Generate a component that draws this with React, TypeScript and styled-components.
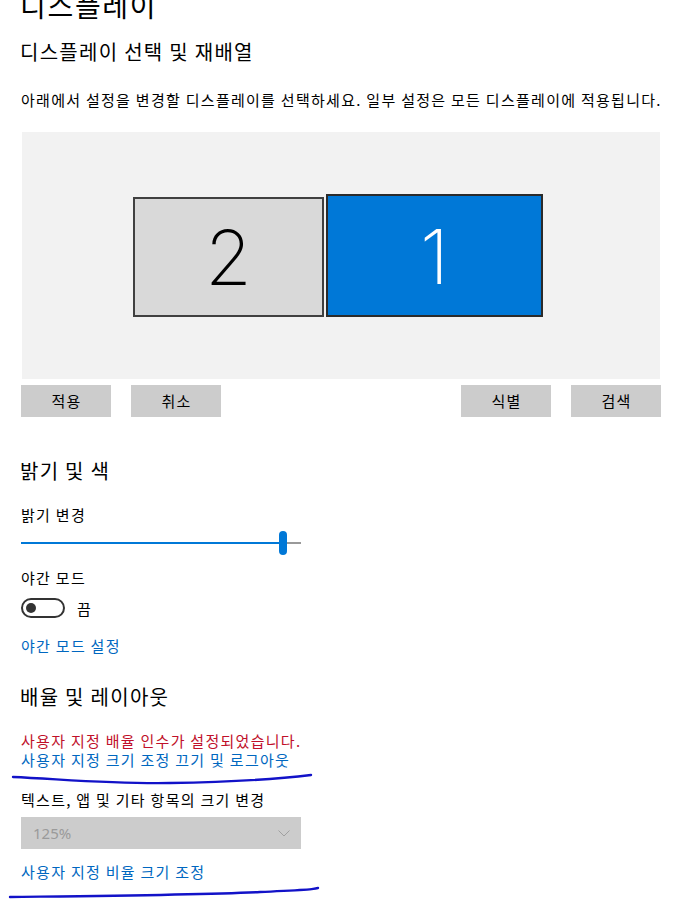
import React from "react";
import styled, { createGlobalStyle } from "styled-components";

const Global = createGlobalStyle`
  html, body { margin: 0; padding: 0; background: #ffffff; }
  body { font-family: "Noto Sans CJK KR", "Noto Sans", sans-serif; color: #000; overflow: hidden; }
  * { box-sizing: border-box; }
`;

const Page = styled.div`
  position: relative;
  width: 680px;
  height: 899px;
  overflow: hidden;
  padding-left: 21px;
  letter-spacing: 0.08em;
`;

const Title = styled.h1`
  margin: -13px 0 0 -1px;
  font-size: 28px;
  line-height: 36px;
  font-weight: 400;
  height: 36px;
  letter-spacing: 0.06em;
`;

const SectionTitle = styled.h2<{ $mt: number }>`
  margin: ${(p) => p.$mt}px 0 0 -1px;
  font-size: 20px;
  line-height: 28px;
  height: 28px;
  font-weight: 400;
`;

const Text = styled.p<{ $mt: number; $color?: string; $lh?: number }>`
  margin: ${(p) => p.$mt}px 0 0 0;
  font-size: 15px;
  line-height: ${(p) => p.$lh ?? 20}px;
  height: ${(p) => p.$lh ?? 20}px;
  color: ${(p) => p.$color ?? "#000"};
  white-space: nowrap;
`;

const Link = styled.a<{ $mt: number; $lh?: number }>`
  display: block;
  margin: ${(p) => p.$mt}px 0 0 0;
  font-size: 15px;
  line-height: ${(p) => p.$lh ?? 20}px;
  height: ${(p) => p.$lh ?? 20}px;
  color: #0067c0;
  text-decoration: none;
  white-space: nowrap;
  cursor: pointer;
`;

const Arrange = styled.div`
  margin-top: 22px;
  width: 638px;
  margin-left: 1px;
  height: 247px;
  background: #f2f2f2;
  display: flex;
  justify-content: center;
  align-items: flex-end;
  padding-bottom: 62px;
  padding-right: 6px;
  letter-spacing: 0;
`;

const Monitor = styled.div<{ $active?: boolean; $w: number; $h: number }>`
  width: ${(p) => p.$w}px;
  height: ${(p) => p.$h}px;
  background: ${(p) => (p.$active ? "#0078d7" : "#d9d9d9")};
  border: 2px solid ${(p) => (p.$active ? "#2b2b2b" : "#404040")};
  display: flex;
  align-items: center;
  justify-content: center;
  color: ${(p) => (p.$active ? "#ffffff" : "#000000")};
  font-family: Inter, "Open Sans", sans-serif;
  font-weight: 200;
  font-size: 76px;
  line-height: 1;
  & + & { margin-left: 2px; }
`;

const ButtonRow = styled.div`
  margin-top: 6px;
  width: 640px;
  display: flex;
  justify-content: space-between;
`;

const ButtonGroup = styled.div`
  display: flex;
  gap: 20px;
`;

const Button = styled.button`
  width: 90px;
  height: 32px;
  border: none;
  background: #cccccc;
  font-family: "Noto Sans CJK KR", sans-serif;
  font-size: 15px;
  letter-spacing: 0.08em;
  color: #000;
  padding: 0 0 0 1px;
  line-height: 32px;
`;

const Slider = styled.div`
  margin-top: 6px;
  width: 280px;
  height: 24px;
  position: relative;
  display: flex;
  align-items: center;
`;

const TrackFill = styled.div`
  height: 2px;
  background: #0078d7;
`;

const TrackRest = styled.div`
  height: 2px;
  flex: 1;
  background: #999999;
`;

const Thumb = styled.div`
  width: 8px;
  height: 24px;
  border-radius: 4px;
  background: #0078d7;
`;

const ToggleRow = styled.div`
  margin-top: 10px;
  display: flex;
  align-items: center;
  height: 20px;
  gap: 12px;
  font-size: 15px;
`;

const ToggleTrack = styled.div`
  width: 44px;
  height: 20px;
  border: 2px solid #333333;
  border-radius: 10px;
  display: flex;
  align-items: center;
  padding-left: 3px;
`;

const Knob = styled.div`
  width: 10px;
  height: 10px;
  border-radius: 50%;
  background: #333333;
`;

const Select = styled.div`
  margin-top: 7px;
  width: 280px;
  height: 32px;
  background: #cccccc;
  display: flex;
  align-items: center;
  justify-content: space-between;
  padding: 0 11px 0 12px;
  font-family: "Noto Sans", sans-serif;
  font-size: 15px;
  letter-spacing: 0;
  color: #9a9a9a;
`;

const Scribble = styled.svg`
  position: absolute;
  left: 0;
  top: 0;
  pointer-events: none;
`;

export default function App() {
  return (
    <>
      <Global />
      <Page>
        <Title>디스플레이</Title>
        <SectionTitle $mt={15}>디스플레이 선택 및 재배열</SectionTitle>
        <Text $mt={24}>아래에서 설정을 변경할 디스플레이를 선택하세요. 일부 설정은 모든 디스플레이에 적용됩니다.</Text>
        <Arrange>
          <Monitor $w={191} $h={120}>2</Monitor>
          <Monitor $active $w={217} $h={123}>1</Monitor>
        </Arrange>
        <ButtonRow>
          <ButtonGroup>
            <Button>적용</Button>
            <Button>취소</Button>
          </ButtonGroup>
          <ButtonGroup>
            <Button>식별</Button>
            <Button>검색</Button>
          </ButtonGroup>
        </ButtonRow>

        <SectionTitle $mt={40}>밝기 및 색</SectionTitle>
        <Text $mt={20}>밝기 변경</Text>
        <Slider>
          <TrackFill style={{ width: 258 }} />
          <Thumb />
          <TrackRest />
        </Slider>
        <Text $mt={13}>야간 모드</Text>
        <ToggleRow>
          <ToggleTrack>
            <Knob />
          </ToggleTrack>
          <span>끔</span>
        </ToggleRow>
        <Link $mt={18}>야간 모드 설정</Link>

        <SectionTitle $mt={27}>배율 및 레이아웃</SectionTitle>
        <Text $mt={20} $lh={19} $color="#c0102a">사용자 지정 배율 인수가 설정되었습니다.</Text>
        <Link $mt={0} $lh={19}>사용자 지정 크기 조정 끄기 및 로그아웃</Link>
        <Text $mt={21}>텍스트, 앱 및 기타 항목의 크기 변경</Text>
        <Select>
          <span>125%</span>
          <svg width="12" height="7" viewBox="0 0 12 7">
            <polyline points="0.5,0.5 6,6 11.5,0.5" fill="none" stroke="#a0a0a0" strokeWidth="1" />
          </svg>
        </Select>
        <Link $mt={13}>사용자 지정 비율 크기 조정</Link>

        <Scribble width="680" height="899" viewBox="0 0 680 899">
          <path
            d="M13 777 C 60 779, 110 784, 170 783 S 270 780, 311 775"
            fill="none"
            stroke="#1212c8"
            strokeWidth="2.4"
            strokeLinecap="round"
          />
          <path
            d="M10 897 C 90 896, 200 895, 260 892 S 305 890, 318 888"
            fill="none"
            stroke="#1212c8"
            strokeWidth="2.4"
            strokeLinecap="round"
          />
        </Scribble>
      </Page>
    </>
  );
}
